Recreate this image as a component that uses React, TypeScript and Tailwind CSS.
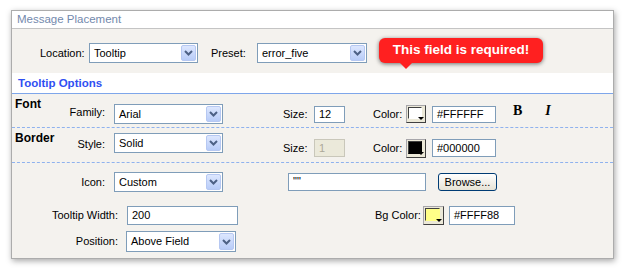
import React from "react"

const font = "font-['Tahoma','Liberation_Sans',Arial,sans-serif]"

function Chevron() {
  return (
    <svg width="9" height="6" viewBox="0 0 9 6">
      <path d="M1 1l3.5 3.5L8 1" fill="none" stroke="#4d6185" strokeWidth="2" />
    </svg>
  )
}

function Select({ value, w, h }: { value: string; w: string; h: string }) {
  return (
    <div className={`${w} ${h} flex items-stretch border border-[#7f9db9] bg-white p-[1px]`}>
      <div className="flex flex-1 items-center pl-[3px] text-[11px] text-black">{value}</div>
      <div className="flex w-[15px] items-center justify-center rounded-[2px] border border-[#b6c8f2] bg-gradient-to-b from-[#dde7fe] to-[#b8ccf8]">
        <Chevron />
      </div>
    </div>
  )
}

function TextBox({ value, w, h, className = "" }: { value: string; w: string; h: string; className?: string }) {
  return (
    <div className={`${w} ${h} flex items-center border border-[#7f9db9] bg-white pl-[4px] text-[11px] text-black ${className}`}>
      {value}
    </div>
  )
}

function Swatch({ color, w, h }: { color: string; w: string; h: string }) {
  return (
    <div className={`${w} ${h} relative flex border border-t-[#a7a6aa] border-l-[#a7a6aa] border-b-[#404040] border-r-[#404040] bg-[#ece9d8] p-[1px] pr-[3px] pb-[3px]`}>
      <div className="flex-1 border border-t-[#404040] border-l-[#404040] border-b-transparent border-r-transparent" style={{ backgroundColor: color }} />
      <svg className="absolute bottom-[1px] right-[1px]" width="6" height="4" viewBox="0 0 6 4">
        <path d="M0 0h6L3 3z" fill="#000" />
      </svg>
    </div>
  )
}

export default function App() {
  return (
    <div className={`${font} h-[268px] w-[623px] bg-white pl-[11px] pt-[10px]`}>
      <div className="flex h-[249px] w-[603px] flex-col border border-[#acacac] bg-[#f4f2ee] shadow-[1px_2px_6px_rgba(0,0,0,0.35)]">
        {/* header */}
        <div className="h-[18px] border-b border-[#c4c4c4] bg-white pl-[5px] text-[11.5px] leading-[17px] text-[#7389ad]">
          Message Placement
        </div>

        {/* location / preset */}
        <div className="flex h-[44px] items-start pt-[14px] text-[11px]">
          <div className="flex h-[20px] items-center">
            <span className="ml-[28px] w-[49px]">Location:</span>
            <Select value="Tooltip" w="w-[109px]" h="h-[20px]" />
            <span className="ml-[13px] w-[46px]">Preset:</span>
            <Select value="error_five" w="w-[110px]" h="h-[20px]" />
          </div>
          <div className="relative ml-[12px] -mt-[5px] flex h-[25px] w-[164px] items-center justify-center rounded-[6px] bg-[#ff2020] text-[13.5px] font-bold text-white shadow-[0_1px_4px_rgba(0,0,0,0.55)]">
            This field is required!
            <svg className="absolute left-[20px] top-[24px]" width="14" height="8" viewBox="0 0 14 8">
              <path d="M0 0h14L7 7z" fill="#ff2020" />
            </svg>
          </div>
        </div>

        {/* tooltip options */}
        <div className="h-[21px] border-b border-[#7ea6ea] bg-white pl-[6px] text-[11.5px] font-bold leading-[20px] text-[#2f4ff2]">
          Tooltip Options
        </div>

        {/* font */}
        <div className="flex h-[34px] items-start border-b border-dashed border-[#8fb2ee] pl-[3px] text-[11px]">
          <div className="w-[40px] pt-[3px] text-[12px] font-bold leading-[14px]">Font</div>
          <div className="mt-[10px] flex h-[20px] items-center">
            <span className="w-[50px] pb-[4px] text-right">Family:</span>
            <span className="ml-[9px]">
              <Select value="Arial" w="w-[109px]" h="h-[20px]" />
            </span>
            <span className="ml-[60px] w-[26px]">Size:</span>
            <TextBox value="12" w="w-[31px]" h="h-[17px]" className="ml-[5px]" />
            <span className="ml-[28px] w-[29px]">Color:</span>
            <span className="ml-[4px]">
              <Swatch color="#ffffff" w="w-[20px]" h="h-[18px]" />
            </span>
            <TextBox value="#FFFFFF" w="w-[64px]" h="h-[17px]" className="ml-[6px]" />
            <span className="mb-[8px] ml-[17px] font-['Liberation_Serif',serif] text-[14px] font-bold">B</span>
            <span className="mb-[8px] ml-[23px] font-['Liberation_Serif',serif] text-[14px] font-bold italic">I</span>
          </div>
        </div>

        {/* border */}
        <div className="flex h-[35px] items-start border-b border-dashed border-[#8fb2ee] pl-[3px] text-[11px]">
          <div className="w-[40px] pt-[3px] text-[12px] font-bold leading-[14px]">Border</div>
          <div className="mt-[5px] flex h-[20px] items-center">
            <span className="w-[50px] pt-[3px] text-right">Style:</span>
            <span className="ml-[9px]">
              <Select value="Solid" w="w-[109px]" h="h-[20px]" />
            </span>
          </div>
          <div className="mt-[11px] flex h-[18px] items-center">
            <span className="ml-[60px] w-[26px]">Size:</span>
            <div className="ml-[5px] flex h-[18px] w-[31px] items-center border border-[#c9c7ba] bg-[#ebe9da] pl-[4px] text-[#aca899]">
              1
            </div>
            <span className="ml-[28px] w-[29px]">Color:</span>
            <span className="ml-[4px]">
              <Swatch color="#000000" w="w-[20px]" h="h-[19px]" />
            </span>
            <TextBox value="#000000" w="w-[64px]" h="h-[18px]" className="ml-[6px]" />
          </div>
        </div>

        {/* icon / width / position */}
        <div className="flex flex-col text-[11px]">
          <div className="mt-[9px] flex h-[20px] items-center">
            <span className="w-[93px] text-right">Icon:</span>
            <span className="ml-[9px]">
              <Select value="Custom" w="w-[109px]" h="h-[20px]" />
            </span>
            <TextBox value={'""'} w="w-[138px]" h="h-[18px]" className="ml-[65px] items-start pt-[2px] text-[10px] leading-none text-[#2f5fd0]" />
            <div className="ml-[12px] flex h-[18px] w-[59px] items-center justify-center rounded-[3px] border border-[#003c74] bg-gradient-to-b from-white to-[#e6e3d6] text-[11px]">
              Browse...
            </div>
          </div>

          <div className="mt-[14px] flex h-[18px] items-center">
            <span className="w-[106px] text-right">Tooltip Width:</span>
            <TextBox value="200" w="w-[111px]" h="h-[19px]" className="ml-[9px]" />
            <span className="ml-[137px] w-[46px]">Bg Color:</span>
            <span className="ml-[2px]">
              <Swatch color="#ffff88" w="w-[21px]" h="h-[19px]" />
            </span>
            <TextBox value="#FFFF88" w="w-[66px]" h="h-[19px]" className="ml-[5px]" />
          </div>

          <div className="mt-[7px] flex h-[21px] items-center">
            <span className="w-[106px] text-right">Position:</span>
            <span className="ml-[8px]">
              <Select value="Above Field" w="w-[110px]" h="h-[21px]" />
            </span>
          </div>
        </div>
      </div>
    </div>
  )
}
